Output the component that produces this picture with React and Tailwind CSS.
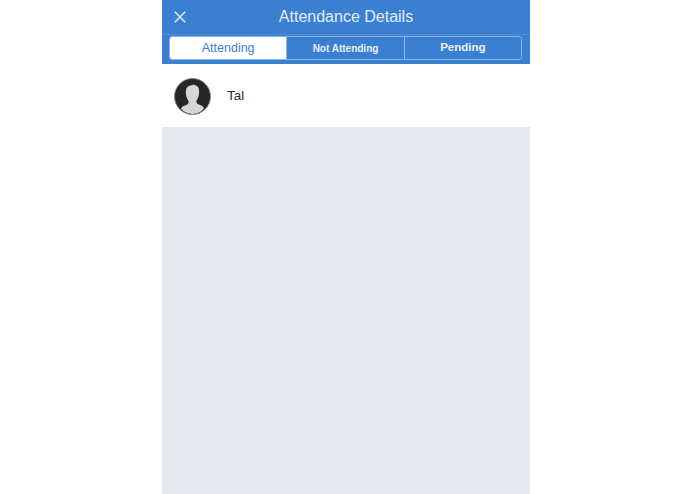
const tabs = [
  { label: 'Attending', active: true },
  { label: 'Not Attending', small: true },
  { label: 'Pending', bold: true },
];

const Avatar = () => (
  <svg width="37" height="37" viewBox="0 0 38 38" className="shrink-0">
    <circle cx="19" cy="19" r="18.5" fill="#262626" stroke="#8a8a8a" strokeWidth="1" />
    <clipPath id="avatar-clip">
      <circle cx="19" cy="19" r="18" />
    </clipPath>
    <path
      clipPath="url(#avatar-clip)"
      d="M19 7.500c-4.600 0-6.800 2.300-6.800 6.500 0 3.500.6 6.400 2 8.300.6.800.8 1.500.8 2.400 0 1.500-.8 2.400-2.600 3.100-2.400.9-4.300 1.500-5.200 3.900C9.500 34.500 14 37 19 37s9.500-2.500 11.800-5.800c-.9-2.400-2.800-3-5.200-3.900-1.800-.7-2.600-1.600-2.600-3.100 0-.9.2-1.600.8-2.400 1.400-1.900 2-4.800 2-8.300 0-4.200-2.200-6.500-6.800-6.500z"
      fill="#d6d6d6"
    />
  </svg>
);

export default function App() {
  return (
    <div className="h-[494px] bg-white pl-[162px] font-['Liberation_Sans',Arial,sans-serif]">
      <div className="w-[368px] h-full flex flex-col bg-[#e6e9ed]">
        <div className="bg-[#3b7fd1] text-white">
          <div className="h-[35px] flex items-center relative border-b border-[#4f8dd8]">
            <svg width="12" height="12" viewBox="0 0 12 12" className="absolute left-[12px] top-[11px]" fill="none" stroke="#e8f0fa" strokeWidth="1.4">
              <path d="M.8.8l10.400 10.400M11.200.8L.8 11.200" />
            </svg>
            <div className="w-full text-center text-[16px] text-[#e3edf9] leading-none">Attendance Details</div>
          </div>
          <div className="h-[29px] pl-[7px] pr-[8px] pt-px">
            <div className="flex h-[24px] rounded-[3px] border border-[#8db5e6] overflow-hidden">
              {tabs.map((t, i) => (
                <div
                  key={t.label}
                  className={`flex-1 flex items-center justify-center ${i > 0 ? 'border-l border-[#8db5e6]' : ''} ${t.active ? 'bg-white text-[#3b7fd1] text-[12.5px]' : 'text-[#e8f0fa]'} ${t.small ? 'text-[10px] font-bold' : ''} ${t.bold ? 'text-[11.5px] font-bold' : ''}`}
                >
                  {t.label}
                </div>
              ))}
            </div>
          </div>
        </div>
        <div className="h-[63px] bg-white flex items-center pl-[12px] gap-[16px] pt-px">
          <Avatar />
          <span className="text-[13.5px] text-[#2b2b2b]">Tal</span>
        </div>
      </div>
    </div>
  );
}
